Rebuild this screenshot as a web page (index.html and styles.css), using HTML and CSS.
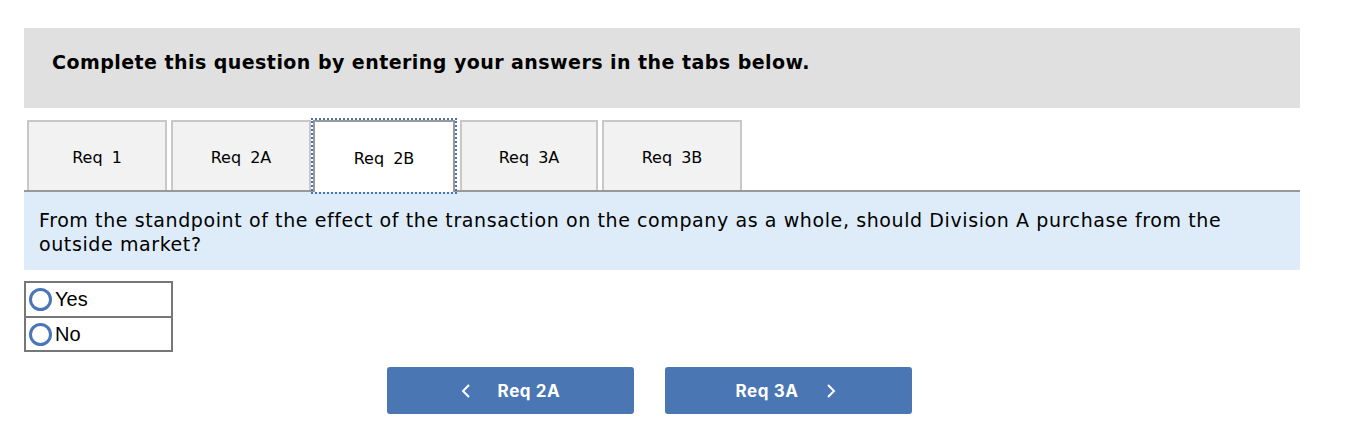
FILE: index.html
```html
<!DOCTYPE html>
<html>
<head>
<meta charset="utf-8">
<link rel="stylesheet" href="styles.css">
</head>
<body>
<div class="page">
  <div class="header">Complete this question by entering your answers in the tabs below.</div>
  <div class="tabs">
    <div class="tab">Req 1</div>
    <div class="tab">Req 2A</div>
    <div class="tab active">Req 2B</div>
    <div class="tab narrow">Req 3A</div>
    <div class="tab">Req 3B</div>
  </div>
  <div class="question">From the standpoint of the effect of the transaction on the company as a whole, should Division A purchase from the outside market?</div>
  <div class="options">
    <div class="option"><span class="radio"></span><span class="label">Yes</span></div>
    <div class="option"><span class="radio"></span><span class="label">No</span></div>
  </div>
  <div class="nav">
    <button class="btn prev"><svg class="chev" width="10" height="16" viewBox="0 0 10 16"><path d="M8 2 L2 8 L8 14" fill="none" stroke="#fff" stroke-width="2"/></svg><span>Req 2A</span></button>
    <button class="btn next"><span>Req 3A</span><svg class="chev" width="10" height="16" viewBox="0 0 10 16"><path d="M2 2 L8 8 L2 14" fill="none" stroke="#fff" stroke-width="2"/></svg></button>
  </div>
</div>
</body>
</html>
```
FILE: styles.css
```css
* { box-sizing: border-box; }
body { margin: 0; background: #fff; font-family: "DejaVu Sans", Verdana, sans-serif; color: #000; }
.page { margin: 28px 46px 0 24px; }
.header {
  background: #e0e0e0;
  height: 80px;
  padding: 0 28px 12px;
  display: flex;
  align-items: center;
  font-weight: bold;
  font-size: 19px;
  letter-spacing: 0.45px;
}
.tabs {
  display: flex;
  margin-top: 12px;
  padding-left: 3px;
  border-bottom: 2px solid #999;
  height: 72px;
}
.tab {
  width: 140px;
  height: 70px;
  margin-right: 4px;
  background: #f2f2f2;
  border: 2px solid #c8c8c8;
  border-bottom: none;
  display: flex;
  align-items: center;
  justify-content: center;
  font-size: 16px;
  word-spacing: 4px;
  padding-top: 2px;
}
.tab.narrow { width: 138px; }
.tab.active {
  background: #fff;
  border: 2px solid #999;
  border-bottom: none;
  height: 72px;
  width: 142px;
  margin-left: -2px;
  margin-right: 5px;
  outline: 2px dotted #4a76b8;
  outline-offset: 0;
  padding-top: 2px;
}
.question {
  background: #ddecf8;
  padding: 16px 30px 14px 15px;
  font-size: 19px;
  line-height: 24px;
  letter-spacing: 0.6px;
}
.options {
  margin-top: 11px;
  width: 149px;
  border: 2px solid #777;
}
.option {
  height: 33px;
  display: flex;
  align-items: center;
  padding-left: 3px;
  font-family: "Liberation Sans", Arial, sans-serif;
  font-size: 20px;
}
.option + .option { border-top: 2px solid #777; height: 34px; }
.radio {
  width: 23px;
  height: 23px;
  border: 3px solid #4a76b8;
  border-radius: 50%;
  margin-right: 3px;
  background: #fff;
}
.nav {
  display: flex;
  gap: 31px;
  margin-top: 15px;
  padding-left: 363px;
}
.btn {
  width: 247px;
  height: 47px;
  background: #4a76b4;
  border: none;
  border-radius: 3px;
  color: #fff;
  font-family: Inter, Roboto, sans-serif;
  font-weight: bold;
  font-size: 17px;
  letter-spacing: 0.6px;
  display: flex;
  align-items: center;
  justify-content: center;
  gap: 27px;
  padding: 0;
}
.btn.next { padding-right: 6px; }
.chev { display: block; }
```
